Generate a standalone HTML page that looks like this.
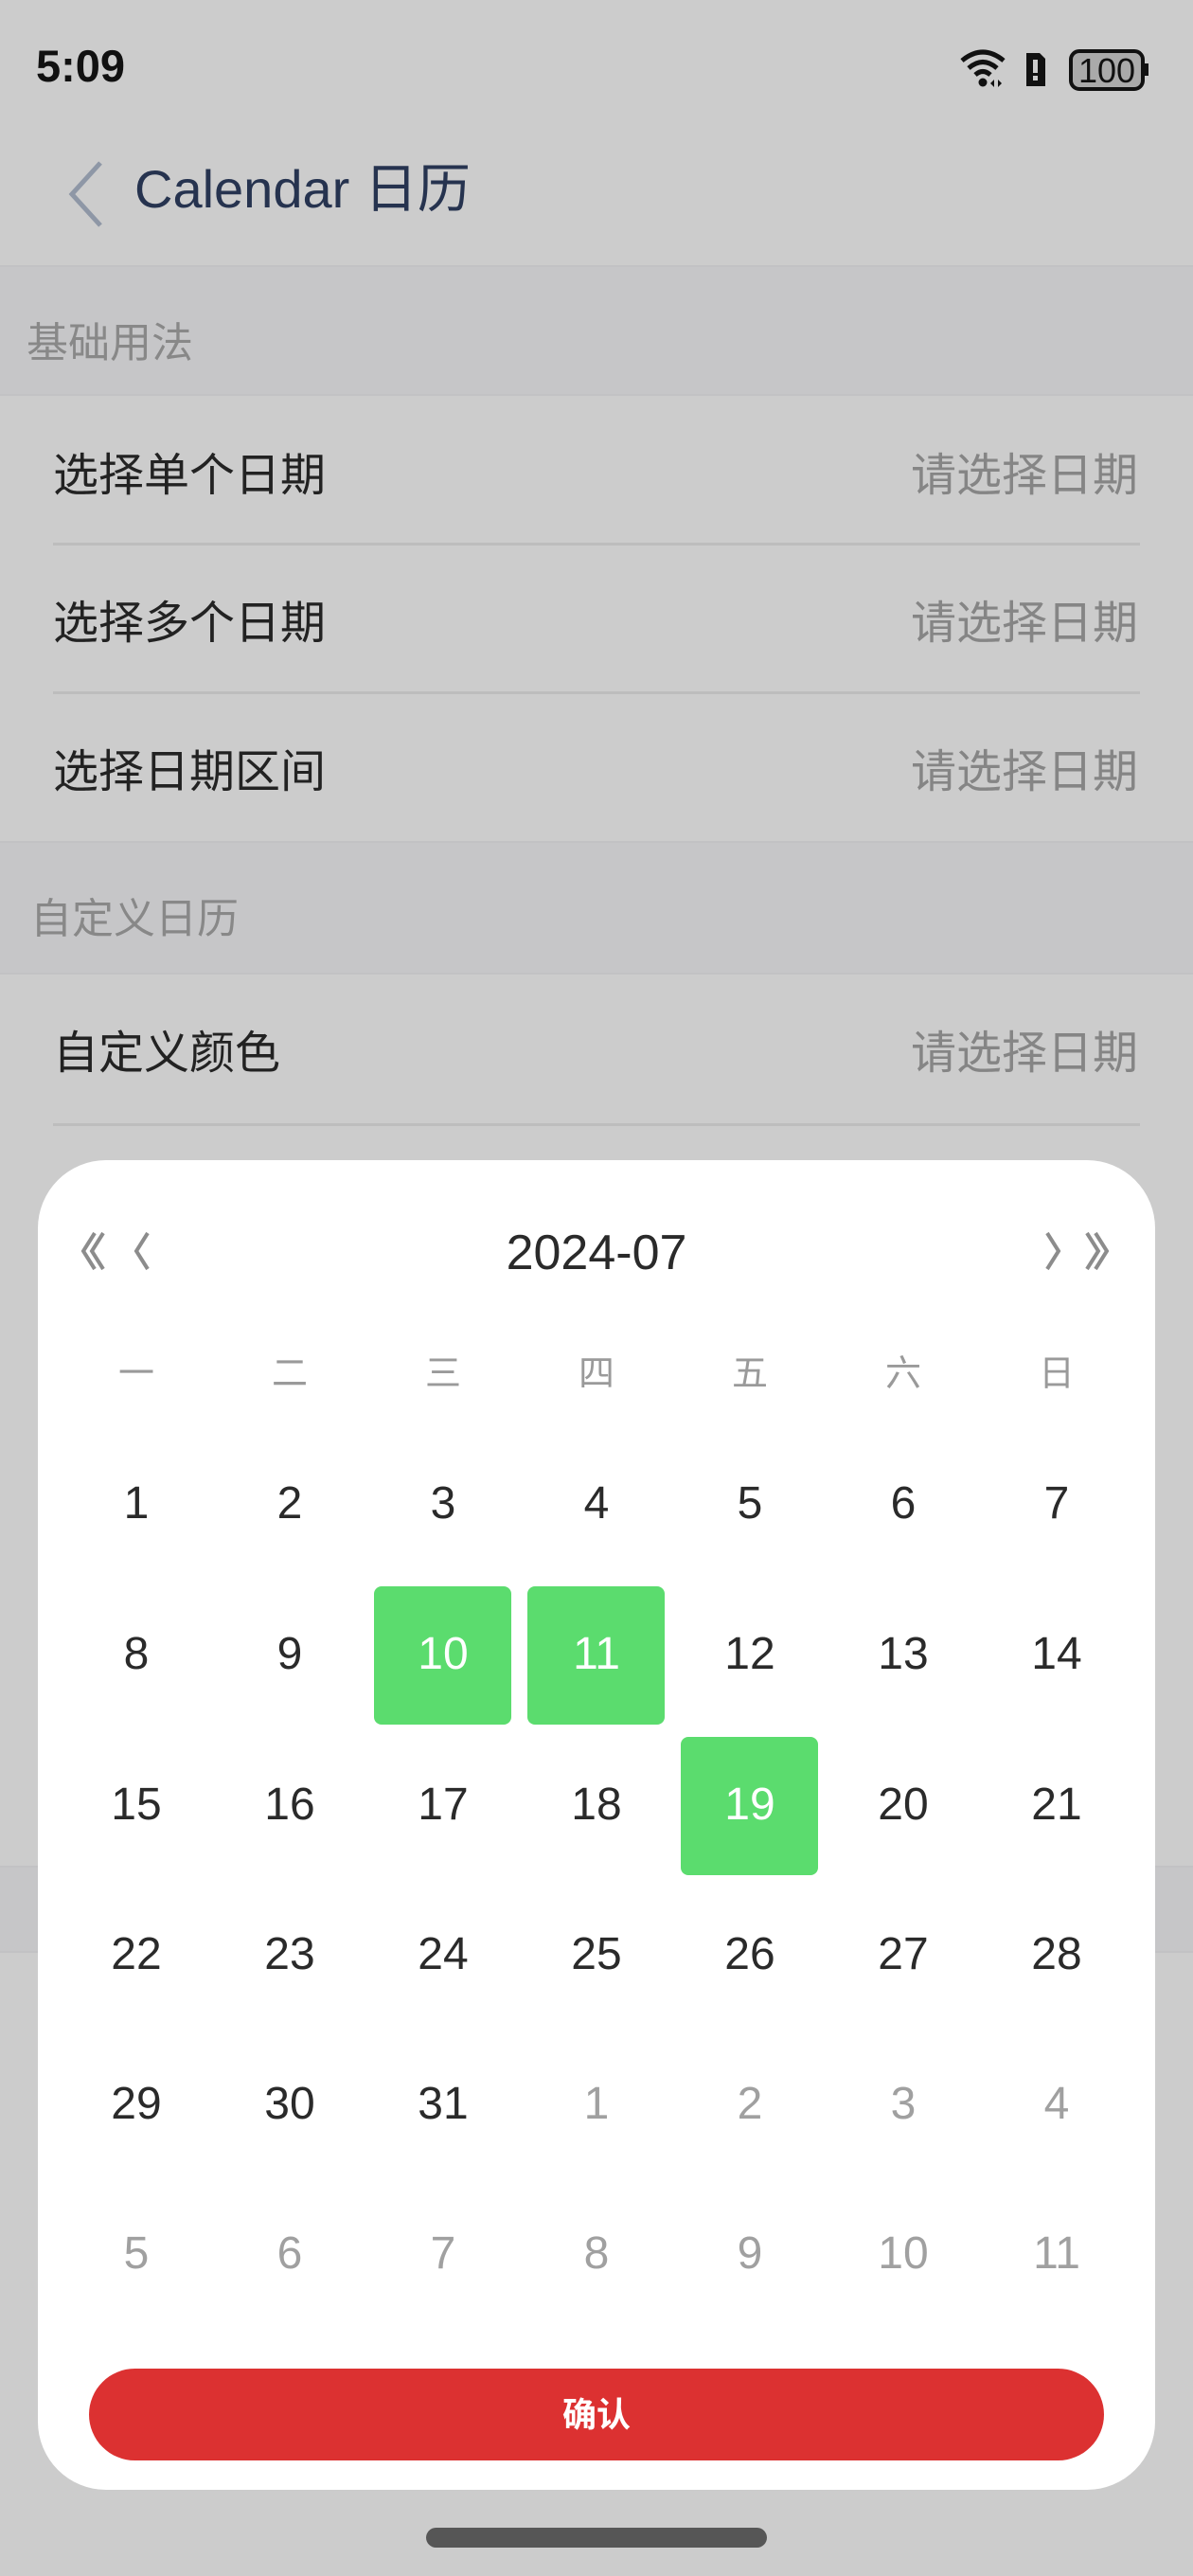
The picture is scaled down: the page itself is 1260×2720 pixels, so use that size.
<!DOCTYPE html>
<html><head><meta charset="utf-8"><style>
*{margin:0;padding:0;box-sizing:border-box}
body{width:1260px;height:2720px;background:#cccccc;position:relative;overflow:hidden;font-family:"Liberation Sans","Noto Sans CJK SC",sans-serif}
.a{position:absolute}
.hdr{position:absolute;left:0;width:1260px;background:#c6c6c8;border-top:2px solid #c2c2c4;border-bottom:2px solid #c2c2c4}
.ht{position:absolute;font-size:44px;color:#888;}
.rl{position:absolute;left:56px;font-size:48px;color:#222;line-height:1}
.rr{position:absolute;right:58px;font-size:48px;color:#858585;line-height:1}
.ln{position:absolute;left:56px;width:1148px;height:3px;background:#bdbdbd}
.pop{position:absolute;left:40px;top:1225px;width:1180px;height:1404px;background:#fff;border-radius:72px}
.c{position:absolute;width:162px;text-align:center;font-size:48px;line-height:1;color:#2a2a2a}
.g{color:#a0a0a0}
.w{position:absolute;width:162px;text-align:center;font-size:38px;color:#9a9a9a;line-height:1}
.sel{position:absolute;width:145px;height:146px;background:#5bdc6e;border-radius:8px}
</style></head><body>
<div class="a" style="left:38px;top:42px;font-size:47px;font-weight:bold;color:#111">5:09</div>
<svg class="a" style="left:1012px;top:46px" width="210" height="52" viewBox="0 0 210 52">
<path d="M4 18 Q26 0 48 18" stroke="#111" stroke-width="5" fill="none"/>
<path d="M11 26 Q26 13 41 26" stroke="#111" stroke-width="5" fill="none"/>
<path d="M18 33 Q26 26 34 33" stroke="#111" stroke-width="5" fill="none"/>
<circle cx="26" cy="41" r="4.5" fill="#111"/>
<path d="M34 42 l4 -4 v8z M42 38 l4 4 -4 4z" fill="#111"/>
<path d="M72 10 h14 l6 6 v29 h-20z" fill="#111"/>
<rect x="79" y="17" width="5" height="14" fill="#ccc"/><rect x="79" y="34" width="5" height="5" fill="#ccc"/>
<rect x="119" y="8" width="76" height="40" rx="9" fill="#aaa" stroke="#111" stroke-width="4"/>
<rect x="196" y="21" width="5" height="13" fill="#111"/>
<text x="157" y="41" text-anchor="middle" font-family="Liberation Sans" font-size="36" fill="#111">100</text>
</svg>
<svg class="a" style="left:66px;top:168px" width="50" height="74"><path d="M40 4 L10 37 L40 70" stroke="#8e97a6" stroke-width="5" fill="none"/></svg>
<div class="a" style="left:142px;top:172px;font-size:56px;color:#26334f;line-height:1">Calendar 日历</div>

<div class="hdr" style="top:280px;height:138px"></div>
<div class="ht" style="left:28px;top:326px">基础用法</div>
<div class="rl" style="top:479px">选择单个日期</div><div class="rr" style="top:479px">请选择日期</div>
<div class="ln" style="top:573px"></div>
<div class="rl" style="top:635px">选择多个日期</div><div class="rr" style="top:635px">请选择日期</div>
<div class="ln" style="top:730px"></div>
<div class="rl" style="top:792px">选择日期区间</div><div class="rr" style="top:792px">请选择日期</div>
<div class="hdr" style="top:888px;height:141px"></div>
<div class="ht" style="left:32px;top:934px">自定义日历</div>
<div class="rl" style="top:1089px">自定义颜色</div><div class="rr" style="top:1089px">请选择日期</div>
<div class="ln" style="top:1186px"></div>
<div class="hdr" style="top:1970px;height:92px"></div>

<div class="pop"></div>
<svg class="a" style="left:80px;top:1295px" width="100" height="52"><path d="M20 7 L8 26 L20 45 M29 7 L17 26 L29 45 M76 7 L64 26 L76 45" stroke="#8c8c8c" stroke-width="4" fill="none"/></svg>
<svg class="a" style="left:1090px;top:1295px" width="100" height="52"><path d="M16 7 L28 26 L16 45 M58 7 L70 26 L58 45 M67 7 L79 26 L67 45" stroke="#8c8c8c" stroke-width="4" fill="none"/></svg>
<div class="a" style="left:430px;top:1297px;width:400px;text-align:center;font-size:52px;color:#2a2a2a;line-height:1">2024-07</div>

<div class="w" style="left:63px;top:1432px">一</div>
<div class="w" style="left:225px;top:1432px">二</div>
<div class="w" style="left:387px;top:1432px">三</div>
<div class="w" style="left:549px;top:1432px">四</div>
<div class="w" style="left:711px;top:1432px">五</div>
<div class="w" style="left:873px;top:1432px">六</div>
<div class="w" style="left:1035px;top:1432px">日</div>

<div class="sel" style="left:395px;top:1675px"></div>
<div class="sel" style="left:557px;top:1675px"></div>
<div class="sel" style="left:719px;top:1834px"></div>

<div class="c" style="left:63px;top:1564px">1</div><div class="c" style="left:225px;top:1564px">2</div><div class="c" style="left:387px;top:1564px">3</div><div class="c" style="left:549px;top:1564px">4</div><div class="c" style="left:711px;top:1564px">5</div><div class="c" style="left:873px;top:1564px">6</div><div class="c" style="left:1035px;top:1564px">7</div>
<div class="c" style="left:63px;top:1723px">8</div><div class="c" style="left:225px;top:1723px">9</div><div class="c" style="left:387px;top:1723px;color:#fff">10</div><div class="c" style="left:549px;top:1723px;color:#fff">11</div><div class="c" style="left:711px;top:1723px">12</div><div class="c" style="left:873px;top:1723px">13</div><div class="c" style="left:1035px;top:1723px">14</div>
<div class="c" style="left:63px;top:1882px">15</div><div class="c" style="left:225px;top:1882px">16</div><div class="c" style="left:387px;top:1882px">17</div><div class="c" style="left:549px;top:1882px">18</div><div class="c" style="left:711px;top:1882px;color:#fff">19</div><div class="c" style="left:873px;top:1882px">20</div><div class="c" style="left:1035px;top:1882px">21</div>
<div class="c" style="left:63px;top:2040px">22</div><div class="c" style="left:225px;top:2040px">23</div><div class="c" style="left:387px;top:2040px">24</div><div class="c" style="left:549px;top:2040px">25</div><div class="c" style="left:711px;top:2040px">26</div><div class="c" style="left:873px;top:2040px">27</div><div class="c" style="left:1035px;top:2040px">28</div>
<div class="c" style="left:63px;top:2198px">29</div><div class="c" style="left:225px;top:2198px">30</div><div class="c" style="left:387px;top:2198px">31</div><div class="c g" style="left:549px;top:2198px">1</div><div class="c g" style="left:711px;top:2198px">2</div><div class="c g" style="left:873px;top:2198px">3</div><div class="c g" style="left:1035px;top:2198px">4</div>
<div class="c g" style="left:63px;top:2356px">5</div><div class="c g" style="left:225px;top:2356px">6</div><div class="c g" style="left:387px;top:2356px">7</div><div class="c g" style="left:549px;top:2356px">8</div><div class="c g" style="left:711px;top:2356px">9</div><div class="c g" style="left:873px;top:2356px">10</div><div class="c g" style="left:1035px;top:2356px">11</div>

<div class="a" style="left:94px;top:2501px;width:1072px;height:97px;border-radius:49px;background:#dc3131;color:#fff;font-size:36px;font-weight:bold;text-align:center;line-height:97px">确认</div>
<div class="a" style="left:450px;top:2669px;width:360px;height:21px;border-radius:11px;background:#565656"></div>
</body></html>
